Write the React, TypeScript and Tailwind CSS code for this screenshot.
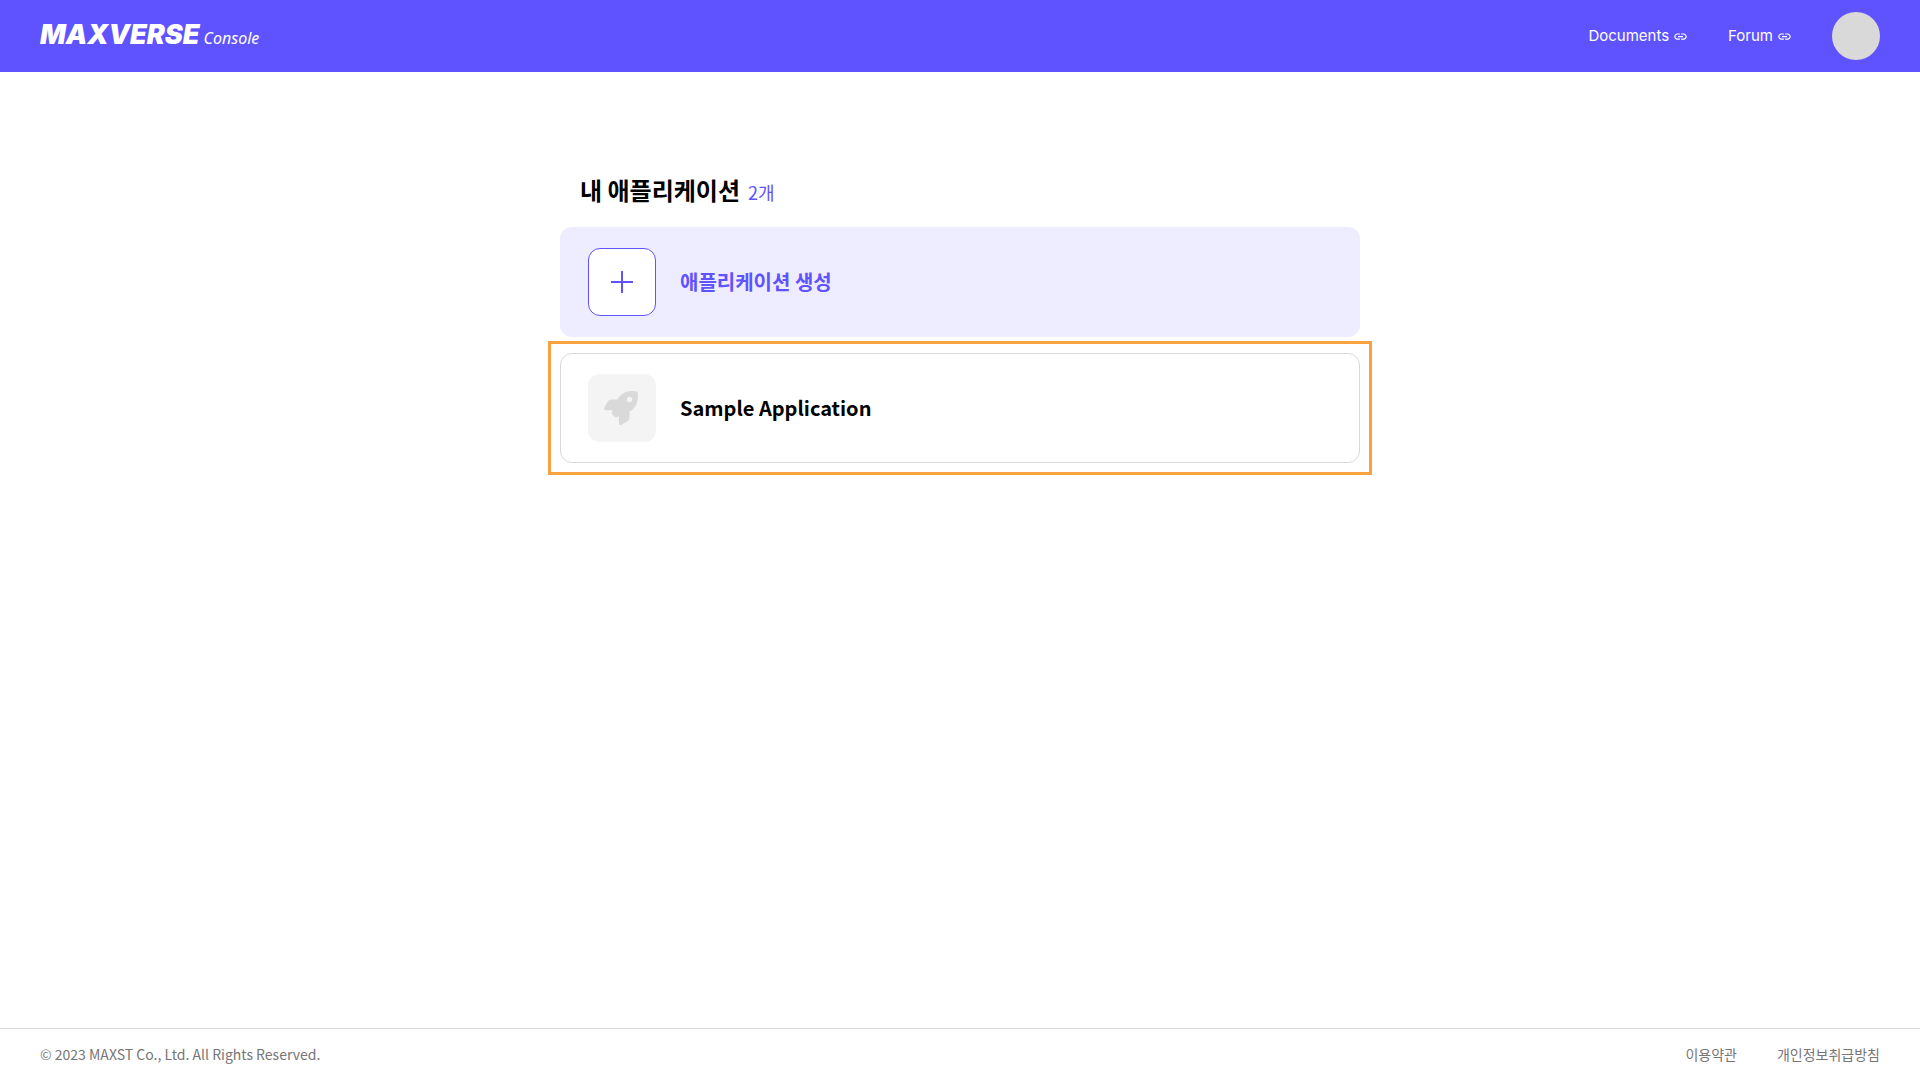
import { MdLink } from "react-icons/md";
import { FaRocket } from "react-icons/fa6";

function HeaderLink({ label }: { label: string }) {
  return (
    <a href="#" className="flex items-center gap-1 font-['Inter',sans-serif] text-[15px] font-normal">
      {label}
      <MdLink className="size-[15px]" aria-hidden="true" />
    </a>
  );
}

export default function App() {
  return (
    <div className="flex min-h-screen flex-col bg-white font-['Noto_Sans_CJK_KR',sans-serif] text-black">
      <header className="flex h-[72px] items-center justify-between bg-[#5f52ff] px-10 text-white">
        <a href="#" className="flex items-baseline gap-1">
          <span className="font-['Inter',sans-serif] text-[27px] leading-8 font-black italic">MAXVERSE</span>
          <span className="font-['Noto_Sans',sans-serif] text-base leading-8 font-normal italic">Console</span>
        </a>
        <nav className="flex items-center gap-10">
          <HeaderLink label="Documents" />
          <HeaderLink label="Forum" />
          <button type="button" aria-label="Account" className="size-12 rounded-full bg-[#d9d9d9]" />
        </nav>
      </header>

      <main className="mx-auto w-full max-w-[800px] flex-1 pt-[100px]">
        <div className="flex items-baseline gap-2 px-5">
          <h1 className="text-2xl leading-9 font-bold">내 애플리케이션</h1>
          <span className="text-lg leading-9 text-[#5f52ff]">2개</span>
        </div>

        <div className="mt-[17px] flex flex-col gap-4">
          <button
            type="button"
            className="flex h-[110px] w-full items-center gap-6 rounded-xl bg-[#eeecff] px-7 text-left text-xl font-bold text-[#5f52ff]"
          >
            <span className="grid size-[68px] place-items-center rounded-xl border border-[#5f52ff] bg-white">
              <svg viewBox="0 0 22 22" className="size-[22px]" stroke="currentColor" strokeWidth="2" aria-hidden="true">
                <path d="M11 0v22M0 11h22" />
              </svg>
            </span>
            애플리케이션 생성
          </button>

          <div className="relative">
            <a
              href="#"
              className="flex h-[110px] items-center gap-6 rounded-xl border border-[#d9d9d9] px-[27px] text-xl font-bold"
            >
              <span className="grid size-[68px] place-items-center rounded-xl bg-[#f4f4f4] pr-0.5">
                <FaRocket className="size-[34px] text-[#d9d9d9]" aria-hidden="true" />
              </span>
              Sample Application
            </a>
            <div className="pointer-events-none absolute -inset-3 border-3 border-[#f7a440]" />
          </div>
        </div>
      </main>

      <footer className="flex h-[52px] items-center justify-between border-t border-[#d9d9d9] px-10 pb-0.5 text-sm text-[#767676]">
        <p>© 2023 MAXST Co., Ltd. All Rights Reserved.</p>
        <nav className="flex gap-10">
          <a href="#">이용약관</a>
          <a href="#">개인정보취급방침</a>
        </nav>
      </footer>
    </div>
  );
}
